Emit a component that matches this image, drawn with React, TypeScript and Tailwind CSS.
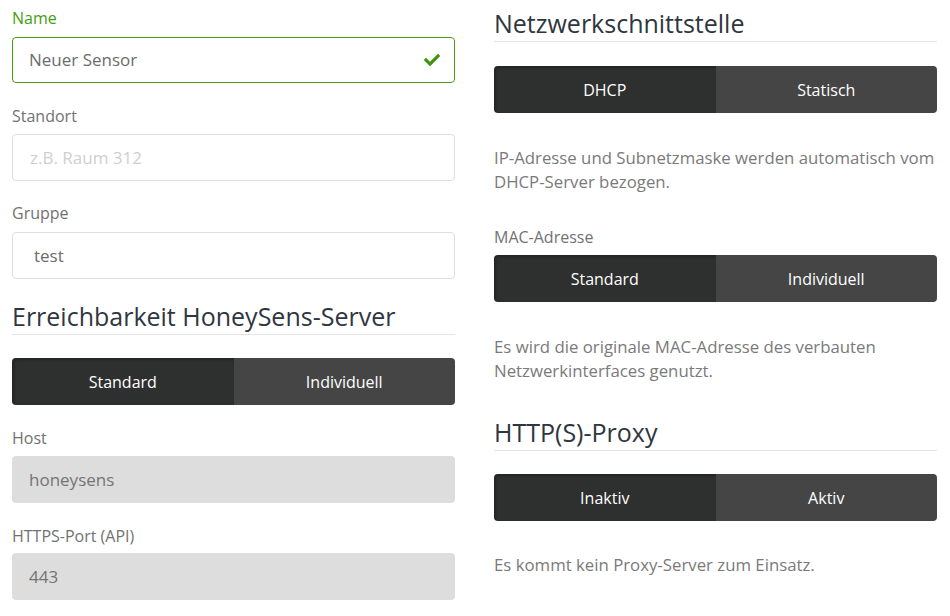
import { FaCheck } from "react-icons/fa";

const font = { fontFamily: '"Open Sans", "Liberation Sans", sans-serif' };

function Label({ children, green }: { children: React.ReactNode; green?: boolean }) {
  return (
    <div className={`text-[16px] leading-[22px] ${green ? "text-[#43a00f]" : "text-[#727272]"}`}>
      {children}
    </div>
  );
}

function Toggle({ left, right }: { left: string; right: string }) {
  return (
    <div className="flex h-[47px] rounded-[4px] overflow-hidden text-[16px] text-white">
      <div className="flex-1 flex items-center justify-center bg-[#2e2f2f] shadow-[inset_2px_2px_3px_rgba(0,0,0,0.25)]">
        {left}
      </div>
      <div className="flex-1 flex items-center justify-center bg-[#454545]">{right}</div>
    </div>
  );
}

function Heading({ children }: { children: React.ReactNode }) {
  return (
    <div className="text-[25px] leading-[32px] text-[#2f3640] pb-[2px] border-b border-[#e5e5e5]">
      {children}
    </div>
  );
}

export default function App() {
  return (
    <div style={font} className="w-[950px] h-[616px] bg-white overflow-hidden flex gap-[39px] px-[12px] pt-[7px]">
      <div className="w-[443px] flex flex-col">
        <Label green>Name</Label>
        <div className="mt-[8px] h-[46px] rounded-[4px] border border-[#4c9c12] flex items-center justify-between pl-[16px] pr-[14px] text-[17px] text-[#6c6c6c]">
          <span>Neuer Sensor</span>
          <FaCheck className="text-[#3f930d] w-[16px] h-[16px]" />
        </div>
        <div className="mt-[22px]">
          <Label>Standort</Label>
        </div>
        <div className="mt-[7px] h-[47px] rounded-[4px] border border-[#dedede] flex items-center pl-[17px] text-[17px] text-[#cfcfcf]">
          z.B. Raum 312
        </div>
        <div className="mt-[21px]">
          <Label>Gruppe</Label>
        </div>
        <div className="mt-[8px] h-[47px] rounded-[4px] border border-[#dedede] flex items-center pl-[21px] text-[17px] text-[#6c6c6c]">
          test
        </div>
        <div className="mt-[21px]">
          <Heading>Erreichbarkeit HoneySens-Server</Heading>
        </div>
        <div className="mt-[23px]">
          <Toggle left="Standard" right="Individuell" />
        </div>
        <div className="mt-[22px]">
          <Label>Host</Label>
        </div>
        <div className="mt-[7px] h-[47px] rounded-[4px] bg-[#dddddd] flex items-center pl-[17px] text-[17px] text-[#747474]">
          honeysens
        </div>
        <div className="mt-[22px]">
          <Label>HTTPS-Port (API)</Label>
        </div>
        <div className="mt-[6px] h-[47px] rounded-[4px] bg-[#dddddd] flex items-center pl-[17px] text-[17px] text-[#747474]">
          443
        </div>
      </div>
      <div className="w-[443px] flex flex-col">
        <Heading>Netzwerkschnittstelle</Heading>
        <div className="mt-[24px]">
          <Toggle left="DHCP" right="Statisch" />
        </div>
        <p className="mt-[33px] text-[16.8px] leading-[24px] text-[#7a7a7a]">
          IP-Adresse und Subnetzmaske werden automatisch vom DHCP-Server bezogen.
        </p>
        <div className="mt-[32px]">
          <Label>MAC-Adresse</Label>
        </div>
        <div className="mt-[7px]">
          <Toggle left="Standard" right="Individuell" />
        </div>
        <p className="mt-[33px] text-[16.8px] leading-[24px] text-[#7a7a7a]">
          Es wird die originale MAC-Adresse des verbauten Netzwerkinterfaces genutzt.
        </p>
        <div className="mt-[33px]">
          <Heading>HTTP(S)-Proxy</Heading>
        </div>
        <div className="mt-[23px]">
          <Toggle left="Inaktiv" right="Aktiv" />
        </div>
        <p className="mt-[32px] text-[16.8px] leading-[24px] text-[#7a7a7a]">
          Es kommt kein Proxy-Server zum Einsatz.
        </p>
      </div>
    </div>
  );
}
